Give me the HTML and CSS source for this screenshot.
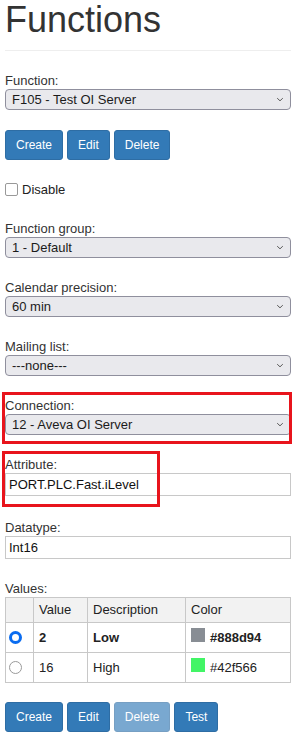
FILE: index.html
```html
<!DOCTYPE html>
<html lang="en">
<head>
<meta charset="utf-8">
<title>Functions</title>
<link rel="stylesheet" href="styles.css">
</head>
<body>
<div class="page">
  <h1 class="title">Functions</h1>
  <hr class="rule">

  <div class="group g-first">
    <label class="lbl">Function:</label>
    <div class="select-wrap">
      <select class="sel"><option>F105 - Test OI Server</option></select>
      <svg class="chev" width="8" height="5" viewBox="0 0 8 5"><path d="M1.2 1.2l2.8 2.6 2.8-2.6" fill="none" stroke="#5a5a5a" stroke-width="1"/></svg>
    </div>
  </div>

  <div class="btns btns-top">
    <button class="btn">Create</button>
    <button class="btn">Edit</button>
    <button class="btn">Delete</button>
  </div>

  <label class="check"><input type="checkbox" class="cb"><span>Disable</span></label>

  <div class="group g-fg">
    <label class="lbl">Function group:</label>
    <div class="select-wrap">
      <select class="sel"><option>1 - Default</option></select>
      <svg class="chev" width="8" height="5" viewBox="0 0 8 5"><path d="M1.2 1.2l2.8 2.6 2.8-2.6" fill="none" stroke="#5a5a5a" stroke-width="1"/></svg>
    </div>
  </div>

  <div class="group">
    <label class="lbl">Calendar precision:</label>
    <div class="select-wrap">
      <select class="sel"><option>60 min</option></select>
      <svg class="chev" width="8" height="5" viewBox="0 0 8 5"><path d="M1.2 1.2l2.8 2.6 2.8-2.6" fill="none" stroke="#5a5a5a" stroke-width="1"/></svg>
    </div>
  </div>

  <div class="group">
    <label class="lbl">Mailing list:</label>
    <div class="select-wrap">
      <select class="sel"><option>---none---</option></select>
      <svg class="chev" width="8" height="5" viewBox="0 0 8 5"><path d="M1.2 1.2l2.8 2.6 2.8-2.6" fill="none" stroke="#5a5a5a" stroke-width="1"/></svg>
    </div>
  </div>

  <div class="group annotated">
    <label class="lbl">Connection:</label>
    <div class="select-wrap">
      <select class="sel"><option>12 - Aveva OI Server</option></select>
      <svg class="chev" width="8" height="5" viewBox="0 0 8 5"><path d="M1.2 1.2l2.8 2.6 2.8-2.6" fill="none" stroke="#5a5a5a" stroke-width="1"/></svg>
    </div>
    <span class="mark mark-conn"></span>
  </div>

  <div class="group annotated">
    <label class="lbl">Attribute:</label>
    <input class="inp" type="text" value="PORT.PLC.Fast.iLevel">
    <span class="mark mark-attr"></span>
  </div>

  <div class="group g-dt">
    <label class="lbl">Datatype:</label>
    <input class="inp" type="text" value="Int16">
  </div>

  <div class="group">
    <label class="lbl">Values:</label>
    <table class="vals">
      <thead>
        <tr>
          <th class="c-sel"></th>
          <th class="c-val">Value</th>
          <th class="c-desc">Description</th>
          <th class="c-col">Color</th>
        </tr>
      </thead>
      <tbody>
        <tr class="selected">
          <td><input type="radio" name="v" class="rd" checked></td>
          <td>2</td>
          <td>Low</td>
          <td><span class="swatch" style="background:#888d94"></span>#888d94</td>
        </tr>
        <tr>
          <td><input type="radio" name="v" class="rd"></td>
          <td>16</td>
          <td>High</td>
          <td><span class="swatch" style="background:#42f566"></span>#42f566</td>
        </tr>
      </tbody>
    </table>
  </div>

  <div class="btns btns-bottom">
    <button class="btn">Create</button>
    <button class="btn">Edit</button>
    <button class="btn" disabled>Delete</button>
    <button class="btn">Test</button>
  </div>
</div>
</body>
</html>
```
FILE: styles.css
```css
* { box-sizing: border-box; }
html, body { margin: 0; padding: 0; background: #fff; }
body {
  font-family: "Liberation Sans", Arial, sans-serif;
  font-size: 13px;
  color: #333;
}
.page { padding: 0 3px 0 5px; }

.title {
  margin: 0;
  font-size: 36px;
  font-weight: 500;
  line-height: 40px;
  color: #333;
}
.rule {
  margin: 10px 0 0;
  border: 0;
  border-top: 1px solid #eee;
  height: 0;
}

.group { margin-top: 21px; }
.g-first { margin-top: 21px; }
.g-fg { margin-top: 24px; }
.g-dt { margin-top: 23px; }
.annotated { position: relative; }

.lbl {
  display: block;
  line-height: 17px;
  font-weight: normal;
  color: #333;
}

.select-wrap { position: relative; }
.sel {
  -webkit-appearance: none;
  appearance: none;
  display: block;
  width: 100%;
  height: 21px;
  margin: 0;
  padding: 0 20px 0 6px;
  font-family: "Liberation Sans", Arial, sans-serif;
  font-size: 13px;
  line-height: 19px;
  color: #1b1b1b;
  background: #e9e9ed;
  border: 1px solid #8f8f9d;
  border-radius: 4px;
}
.chev {
  position: absolute;
  right: 7px;
  top: 8px;
  pointer-events: none;
}

.inp {
  display: block;
  width: 100%;
  height: 23px;
  margin: 0;
  padding: 0 3px;
  font-family: "Liberation Sans", Arial, sans-serif;
  font-size: 13px;
  line-height: 21px;
  color: #111;
  background: #fff;
  border: 1px solid #c8c8c8;
  border-radius: 0;
}

.btns { display: flex; gap: 4px; }
.btns-top { margin-top: 20px; }
.btns-bottom { margin-top: 19px; }
.btn {
  height: 30px;
  padding: 0 10px;
  font-family: "Liberation Sans", Arial, sans-serif;
  font-size: 12px;
  line-height: 28px;
  color: #fff;
  background: #337ab7;
  border: 1px solid #2e6da4;
  border-radius: 3px;
}
.btn:disabled { opacity: .65; }

.check {
  display: flex;
  align-items: center;
  gap: 4px;
  height: 13px;
  margin-top: 23px;
  color: #222;
}
.cb {
  -webkit-appearance: none;
  appearance: none;
  width: 13px;
  height: 13px;
  margin: 0;
  border: 1px solid #999;
  border-radius: 2px;
  background: #fff;
}

.vals {
  width: 100%;
  border-collapse: collapse;
  color: #222;
}
.vals th, .vals td {
  border: 1px solid #c8c8c8;
  text-align: left;
  line-height: 18px;
  vertical-align: middle;
}
.vals th {
  padding: 3px 5px;
  font-weight: normal;
  background: #f2f2f2;
}
.vals td { padding: 5px 5px; }
.vals .selected td { font-weight: bold; }
.c-sel { width: 28px; }
.c-val { width: 54px; }
.c-desc { width: 98px; }

.rd {
  -webkit-appearance: none;
  appearance: none;
  display: block;
  width: 13px;
  height: 13px;
  margin: 0 0 0 -2px;
  border: 1px solid #9a9a9a;
  border-radius: 50%;
  background: #fff;
}
.rd:checked { border: 3px solid #0a6cf0; }

.swatch {
  display: inline-block;
  width: 14px;
  height: 14px;
  margin-right: 5px;
}

.mark {
  position: absolute;
  border: 3px solid #e8141c;
  pointer-events: none;
}
.mark-conn { top: -5px; left: -3px; right: -1px; bottom: -9px; }
.mark-attr { top: -5px; left: -3px; width: 158px; bottom: -11px; }
```
